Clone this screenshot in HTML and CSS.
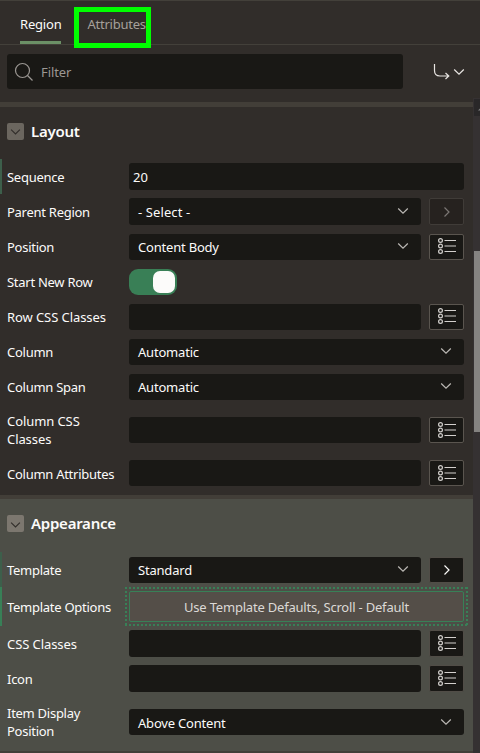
FILE: index.html
```html
<!DOCTYPE html>
<html lang="en">
<head>
<meta charset="utf-8">
<title>Property Editor</title>
<link rel="stylesheet" href="styles.css">
</head>
<body>
<svg class="defs" aria-hidden="true">
  <symbol id="down" viewBox="0 0 12 8"><path d="M1.200 1.500 6 6.200 10.800 1.500"/></symbol>
  <symbol id="right" viewBox="0 0 8 12"><path d="M1.500 1.500 6 6 1.500 10.500"/></symbol>
  <symbol id="list" viewBox="0 0 18 16"><circle cx="2.500" cy="2.500" r="1.900"/><circle cx="2.500" cy="8" r="1.900"/><circle cx="2.500" cy="13.500" r="1.900"/><path d="M6.500 2.500H18M6.500 8H18M6.500 13.500H18"/></symbol>
</svg>
<div class="panel">
  <nav class="tabs">
    <a class="tab active">Region</a>
    <a class="tab attributes">Attributes</a>
    <span class="highlight"></span>
  </nav>
  <div class="toolbar">
    <div class="filter">
      <svg class="search" viewBox="0 0 20 20"><circle cx="8.500" cy="8.500" r="7"/><path d="m13.500 13.500 5 5"/></svg>
      <span class="filter-text">Filter</span>
    </div>
    <div class="goto">
      <svg class="turn" viewBox="0 0 17 17"><path d="M1.500 1v6.500q0 5.500 5.500 5.500h9M12.500 10l3.300 3-3.300 3"/></svg>
      <svg class="down"><use href="#down"/></svg>
    </div>
  </div>

  <section class="group">
    <h2 class="heading"><span class="toggle"><svg class="down"><use href="#down"/></svg></span><span class="title">Layout</span></h2>
    <div class="row changed tall"><label>Sequence</label><div class="field number">20</div></div>
    <div class="row tall"><label>Parent Region</label><div class="field select"><span class="loose">- Select -</span><svg class="down"><use href="#down"/></svg></div><button class="btn disabled"><svg class="right"><use href="#right"/></svg></button></div>
    <div class="row"><label>Position</label><div class="field select"><span>Content Body</span><svg class="down"><use href="#down"/></svg></div><button class="btn"><svg class="list"><use href="#list"/></svg></button></div>
    <div class="row"><label>Start New Row</label><div class="switch"><span class="knob"></span></div></div>
    <div class="row"><label class="loose">Row CSS Classes</label><div class="field"></div><button class="btn"><svg class="list"><use href="#list"/></svg></button></div>
    <div class="row"><label>Column</label><div class="field select"><span>Automatic</span><svg class="down"><use href="#down"/></svg></div></div>
    <div class="row"><label>Column Span</label><div class="field select"><span>Automatic</span><svg class="down"><use href="#down"/></svg></div></div>
    <div class="row double"><label class="loose">Column CSS<br>Classes</label><div class="field"></div><button class="btn"><svg class="list"><use href="#list"/></svg></button></div>
    <div class="row last"><label>Column Attributes</label><div class="field"></div><button class="btn"><svg class="list"><use href="#list"/></svg></button></div>
  </section>

  <section class="group appearance">
    <h2 class="heading"><span class="toggle"><svg class="down"><use href="#down"/></svg></span><span class="title">Appearance</span></h2>
    <div class="row changed"><label>Template</label><div class="field select"><span>Standard</span><svg class="down"><use href="#down"/></svg></div><button class="btn"><svg class="right"><use href="#right"/></svg></button></div>
    <div class="row options"><label>Template Options</label><div class="focus"><button class="options-btn">Use Template Defaults, Scroll - Default</button></div></div>
    <div class="row tall"><label class="loose">CSS Classes</label><div class="field"></div><button class="btn"><svg class="list"><use href="#list"/></svg></button></div>
    <div class="row tall"><label>Icon</label><div class="field"></div><button class="btn"><svg class="list"><use href="#list"/></svg></button></div>
    <div class="row double"><label>Item Display<br>Position</label><div class="field select"><span>Above Content</span><svg class="down"><use href="#down"/></svg></div></div>
  </section>
  <div class="scrollbar"><span class="arrow"><svg class="up" viewBox="0 0 8 5"><path d="M0 4.500 4 .5 8 4.500z"/></svg></span><span class="thumb"></span></div>
</div>
</body>
</html>
```
FILE: styles.css
```css
* { box-sizing: border-box; }
body {
  margin: 0;
  background: #312d2a;
  color: #fcfbfa;
  font: 13px/18px "Noto Sans", "Open Sans", sans-serif;
  overflow: hidden;
}
svg { display: block; fill: none; stroke: currentColor; stroke-width: 1.2; flex: none; }
.defs { position: absolute; width: 0; height: 0; }
.down { width: 12px; height: 8px; }
.right { width: 8px; height: 12px; }
.list { width: 18px; height: 16px; margin-top: -1px; color: #d3d0cd; }
.panel { position: relative; height: 753px; overflow: hidden; }

.tabs {
  position: relative;
  display: flex;
  height: 45px;
  padding-left: 20px;
  gap: 26px;
  border-top: 1px solid #43403a;
  border-bottom: 1px solid #43403a;
}
.tab { height: 43px; padding-top: 14px; letter-spacing: -0.2px; }
.tab.active { width: 41px; border-bottom: 3px solid #6b9066; }
.attributes { color: #a5a09b; padding-left: 0.5px; letter-spacing: -0.25px; }
.highlight {
  position: absolute;
  left: 74px;
  top: 6px;
  width: 77px;
  height: 41px;
  border: 5px solid #00ff00;
}

.toolbar { display: flex; height: 57px; padding: 9px 15px 0 7px; justify-content: space-between; }
.filter {
  display: flex;
  align-items: center;
  width: 396px;
  height: 35px;
  padding-left: 7px;
  border-radius: 3px;
  background: #191815;
  color: #9b9793;
}
.search { width: 20px; height: 20px; margin-right: 7px; }
.filter-text { letter-spacing: -0.1px; padding-top: 1px; }
.goto { display: flex; height: 35px; align-items: center; gap: 3px; color: #e8e5e2; }
.turn { width: 17px; height: 17px; }

.group { height: 393px; border-top: 5px solid #423e38; }
.appearance { height: 256px; border-top-width: 4px; background: #4d4e47; box-shadow: 0 2px #423e38; }
.heading {
  display: flex;
  align-items: center;
  gap: 7px;
  height: 52px;
  margin: 0;
  padding: 0 0 4px 7px;
  font-size: 15px;
  font-weight: 600;
}
.appearance .heading { height: 53px; }
.title { margin-top: -1px; letter-spacing: -0.25px; }
.toggle {
  display: grid;
  place-items: center;
  width: 17px;
  height: 17px;
  border-radius: 2px;
  background: #6b665f;
  color: #312d2a;
}
.appearance .toggle { background: #7c776f; }
.toggle .down { width: 11px; margin-top: 2px; }

.row {
  display: flex;
  align-items: center;
  height: 35px;
  padding: 0 16px 0 7px;
}
.row label { width: 122px; flex: none; padding-top: 1px; letter-spacing: -0.27px; }
.row label.loose { letter-spacing: -0.08px; }
.row.double { height: 52px; }
.row.double label { padding-top: 0; }
.row.last { height: 34px; }
.changed { box-shadow: inset 2px 0 #3d5f4b; }
.field {
  display: flex;
  align-items: center;
  flex: 1;
  height: 26px;
  border-radius: 3px;
  background: #191815;
}
.tall .field { height: 27px; }
.number { padding: 1px 0 0 4px; }
.select { justify-content: space-between; padding: 0 12px 0 9px; }
.select span { padding-top: 1px; letter-spacing: -0.2px; }
.select span.loose { letter-spacing: 0.1px; }
.select .down { margin-top: -1px; color: #bbb8b4; }
.btn {
  display: grid;
  place-items: center;
  width: 35px;
  height: 26px;
  margin-left: 8px;
  padding: 0;
  border: 1px solid #5a554f;
  border-radius: 2px;
  background: #191815;
  color: #fcfbfa;
}
.tall .btn { height: 27px; }
.appearance .btn { border-color: #514d47; }
.btn.disabled { border-color: #403c38; background: #26221f; color: #7c7875; }
.switch {
  display: flex;
  justify-content: flex-end;
  width: 48px;
  height: 26px;
  padding: 2px;
  border-radius: 9px;
  background: #397f56;
}
.knob { width: 22px; height: 22px; border-radius: 7px; background: #fcfbfa; }
.options { height: 39px; box-shadow: inset 2px 0 #388057; }
.focus {
  --dots: #388057 0 2px, transparent 2px 4px;
  display: flex;
  flex: 1;
  height: 39px;
  margin: 0 -4px;
  padding: 4px;
  background:
    repeating-linear-gradient(90deg, var(--dots)) top / 100% 2px no-repeat,
    repeating-linear-gradient(90deg, var(--dots)) bottom / 100% 2px no-repeat,
    repeating-linear-gradient(var(--dots)) left / 2px 100% no-repeat,
    repeating-linear-gradient(var(--dots)) right / 2px 100% no-repeat;
}
.options-btn {
  flex: 1;
  padding: 1px 0 0;
  border: 1px solid #388057;
  border-radius: 2px;
  background: #544e48;
  color: #dcd9d6;
  font: inherit;
  letter-spacing: -0.2px;
}

.scrollbar {
  position: absolute;
  top: 98px;
  right: 0;
  width: 7px;
  height: 655px;
  padding-left: 1px;
  background: #353132;
}
.arrow { display: block; height: 17px; margin-top: 1px; background: #292728; overflow: hidden; }
.up { width: 8px; height: 5px; margin: 7px 0 0 4px; fill: #858585; stroke: none; }
.thumb { display: block; height: 181px; margin-top: 135px; background: #858381; }
```
